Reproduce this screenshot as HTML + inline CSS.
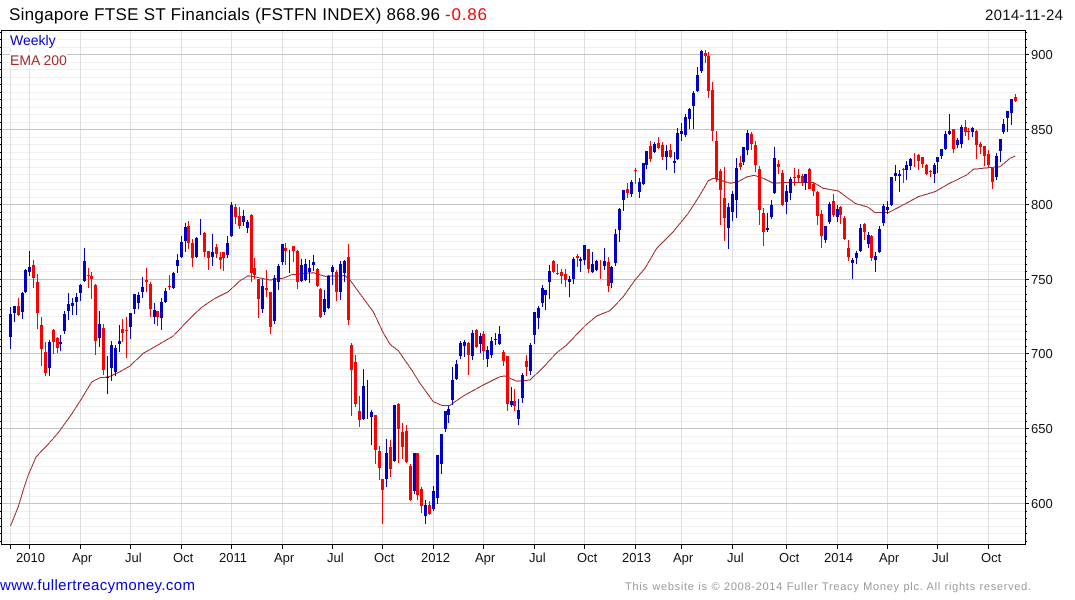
<!DOCTYPE html>
<html><head><meta charset="utf-8"><title>Singapore FTSE ST Financials</title>
<style>
html,body{margin:0;padding:0;background:#fff;width:1075px;height:600px;overflow:hidden}
svg{display:block;font-family:"Liberation Sans",Arial,sans-serif}
text{text-rendering:geometricPrecision}
</style></head><body>
<svg xmlns="http://www.w3.org/2000/svg" width="1075" height="600" viewBox="0 0 1075 600">
<g shape-rendering="crispEdges" fill="none">
<!-- minor horizontal grid -->
<path stroke="#f0f0f0" stroke-width="1" d="M2 32.5H1025M2 39.5H1025M2 47.5H1025M2 62.5H1025M2 69.5H1025M2 77.5H1025M2 84.5H1025M2 92.5H1025M2 99.5H1025M2 107.5H1025M2 114.5H1025M2 122.5H1025M2 137.5H1025M2 144.5H1025M2 152.5H1025M2 159.5H1025M2 167.5H1025M2 174.5H1025M2 182.5H1025M2 189.5H1025M2 197.5H1025M2 212.5H1025M2 219.5H1025M2 226.5H1025M2 234.5H1025M2 241.5H1025M2 249.5H1025M2 256.5H1025M2 264.5H1025M2 271.5H1025M2 286.5H1025M2 294.5H1025M2 301.5H1025M2 309.5H1025M2 316.5H1025M2 324.5H1025M2 331.5H1025M2 339.5H1025M2 346.5H1025M2 361.5H1025M2 368.5H1025M2 376.5H1025M2 383.5H1025M2 391.5H1025M2 398.5H1025M2 406.5H1025M2 413.5H1025M2 421.5H1025M2 436.5H1025M2 443.5H1025M2 451.5H1025M2 458.5H1025M2 466.5H1025M2 473.5H1025M2 481.5H1025M2 488.5H1025M2 496.5H1025M2 511.5H1025M2 518.5H1025M2 526.5H1025M2 533.5H1025M2 541.5H1025"/>
<!-- vertical grid -->
<path stroke="#dedede" stroke-width="1" d="M10.5 31V544M29.5 31V544M80.5 31V544M130.5 31V544M181.5 31V544M231.5 31V544M282.5 31V544M332.5 31V544M382.5 31V544M433.5 31V544M483.5 31V544M534.5 31V544M584.5 31V544M635.5 31V544M681.5 31V544M732.5 31V544M786.5 31V544M837.5 31V544M887.5 31V544M937.5 31V544M988.5 31V544"/>
<!-- major horizontal grid -->
<path stroke="#c4c4c4" stroke-width="1" d="M2 54.5H1025M2 129.5H1025M2 204.5H1025M2 279.5H1025M2 353.5H1025M2 428.5H1025M2 503.5H1025"/>
</g>
<!-- label knock-outs -->
<rect x="10" y="32" width="47" height="16" fill="#fff"/>
<rect x="10" y="52" width="57" height="16" fill="#fff"/>
<!-- EMA -->
<path fill="none" stroke="#a52a2a" stroke-width="1" shape-rendering="crispEdges" d="M10.5 526L18.3 506.7L23.3 490L28.3 475L36 457L40 452.7L46.7 446L58.3 432.7L71.7 414L80.3 400.7L91.7 382L100 377.7L108.3 377L120 371.7L130 366L143.3 353.3L156.7 345.7L173.3 336L190 318.3L201.7 307.3L213.3 299.3L228.3 291.7L240 280.7L248.3 275.7L256.7 277.3L270 280L283 278.3L291.7 274.7L313.3 272.7L325 276.3L345 275.7L350 280L363.3 298.3L373.3 311.7L382.7 331.7L390 344.3L398.3 350.7L411.7 370L420 383.3L433.3 401.7L441.7 405.3L450 405.3L463.3 396L483.3 385L500 376.7L505 376L516.7 381.3L530 380L543.3 367.3L556.7 352.7L566.7 345L585 325.7L596.7 316L610 310.7L623.3 296.7L635 280L645 268.3L656.7 248.3L673.3 231.7L688.3 213.3L700 195L708.3 180.7L713.3 178.3L720 180L730 183.3L738.3 181.7L746.7 177L754.3 175.3L763.3 178.3L773.3 183.3L786.7 182.3L813.3 182.3L823.3 188.3L838.3 191L845 196L855 203.3L868.3 207.3L875 212.7L888.3 212.7L905 204L918.3 196.7L935 191.7L948.3 184L966.7 175L973.3 169.3L988.3 167.7L1000 166.7L1010 158.3L1015.3 156"/>
<g shape-rendering="crispEdges" fill="none">
<!-- blue wicks -->
<path stroke="#0000cd" stroke-width="1" d="M10.5 307V349M14.5 306V322M22.5 292V319M25.5 269V293M29.5 251V276M49.5 340V376M60.5 335V351M64.5 311V334M68.5 293V320M72.5 298V315M76.5 293V315M80.5 284V301M84.5 248V282M99.5 311V347M107.5 356V394M111.5 341V381M115.5 345V376M119.5 325V352M130.5 313V339M134.5 294V314M138.5 292V309M142.5 277V298M154.5 303V324M161.5 298V330M165.5 288V303M173.5 272V289M177.5 254V273M181.5 236V258M185.5 223V252M196.5 237V258M200.5 219V235M212.5 234V266M227.5 236V258M231.5 202V237M243.5 210V226M247.5 220V233M262.5 279V313M274.5 275V324M278.5 264V290M282.5 244V265M289.5 250V273M301.5 259V282M305.5 259V281M309.5 260V283M313.5 255V271M324.5 290V315M328.5 275V309M332.5 265V285M340.5 261V300M344.5 260V282M363.5 369V420M367.5 380V419M371.5 410V445M386.5 439V487M394.5 405V462M414.5 453V494M425.5 500V524M433.5 486V511M437.5 455V504M441.5 434V474M445.5 411V432M448.5 406V423M452.5 367V405M456.5 360V380M460.5 341V359M464.5 340V357M472.5 330V360M480.5 333V353M487.5 346V367M491.5 337V358M495.5 333V345M499.5 326V345M511.5 387V407M518.5 399V425M522.5 373V403M530.5 343V375M534.5 312V344M538.5 306V329M542.5 285V307M545.5 290V310M549.5 265V299M569.5 276V297M573.5 257V284M580.5 257V272M584.5 245V265M592.5 252V273M596.5 260V271M604.5 248V270M611.5 266V288M615.5 229V266M619.5 208V242M623.5 190V211M631.5 180V197M639.5 178V198M643.5 163V185M646.5 151V169M654.5 142V153M666.5 145V170M674.5 152V173M677.5 128V160M681.5 123V141M685.5 114V137M689.5 108V129M693.5 91V129M697.5 67V92M701.5 50V73M728.5 203V249M732.5 191V221M736.5 158V218M743.5 147V165M747.5 130V155M767.5 213V232M771.5 200V219M774.5 147V194M786.5 185V214M790.5 177V200M805.5 174V190M825.5 226V243M829.5 202V224M837.5 205V222M852.5 258V279M856.5 251V264M860.5 224V252M868.5 232V248M875.5 252V272M879.5 226V253M883.5 204V226M887.5 201V214M891.5 177V206M895.5 165V181M899.5 170V192M906.5 161V180M910.5 158V170M934.5 163V183M937.5 157V173M941.5 149V159M945.5 131V150M949.5 114V135M957.5 138V148M961.5 125V148M972.5 127V137M996.5 153V180M1000.5 139V162M1003.5 119V134M1007.5 111V132M1011.5 99V125"/>
<!-- blue bodies -->
<path stroke="#0000cd" stroke-width="3" d="M10.5 314V337M14.5 306V313M22.5 293V312M25.5 270V292M29.5 267V272M49.5 342V368M60.5 342V344M64.5 314V331M68.5 304V311M72.5 303V306M76.5 297V302M80.5 285V293M84.5 261V281M99.5 324V338M107.5 377V378M111.5 345V368M115.5 348V372M119.5 341V344M130.5 313V327M134.5 294V309M138.5 295V303M142.5 287V292M154.5 310V317M161.5 302V318M165.5 291V302M173.5 273V288M177.5 260V266M181.5 242V257M185.5 227V241M196.5 238V257M212.5 252V257M227.5 243V255M231.5 205V236M243.5 216V222M247.5 222V228M262.5 286V309M274.5 278V321M278.5 266V282M282.5 244V262M301.5 265V281M305.5 264V280M309.5 268V272M313.5 262V265M324.5 299V312M328.5 276V308M332.5 267V272M340.5 264V292M344.5 261V273M363.5 386V419M371.5 412V417M386.5 453V479M394.5 405V461M414.5 453V491M425.5 505V516M433.5 491V509M437.5 455V498M441.5 434V464M445.5 411V429M448.5 409V415M452.5 380V400M456.5 364V379M460.5 343V356M464.5 342V346M472.5 333V356M480.5 336V344M487.5 350V359M491.5 341V355M495.5 339V340M499.5 334V344M511.5 401V405M518.5 410V419M522.5 375V398M530.5 345V371M534.5 312V335M538.5 308V318M542.5 288V303M545.5 290V295M549.5 271V282M569.5 279V282M573.5 259V279M580.5 259V261M584.5 245V260M592.5 264V272M596.5 261V270M604.5 261V266M611.5 267V283M615.5 234V263M619.5 209V230M623.5 190V200M631.5 182V194M639.5 182V192M643.5 163V184M646.5 151V165M654.5 144V152M666.5 151V157M674.5 161V163M677.5 133V159M681.5 131V134M685.5 117V135M689.5 109V119M693.5 93V106M697.5 75V91M701.5 51V71M728.5 207V228M732.5 194V212M736.5 168V200M743.5 147V162M747.5 133V150M767.5 228V230M771.5 205V217M774.5 158V193M786.5 191V202M790.5 179V193M805.5 174V183M825.5 226V240M829.5 204V222M837.5 209V217M852.5 260V263M856.5 253V258M860.5 228V251M868.5 235V244M875.5 256V260M879.5 229V252M883.5 206V223M887.5 207V210M891.5 177V205M895.5 173V176M899.5 174V176M906.5 165V170M910.5 159V166M934.5 165V174M937.5 157V162M941.5 149V156M945.5 134V149M949.5 131V134M957.5 140V145M961.5 127V144M972.5 128V132M996.5 156V177M1000.5 139V151M1003.5 124V132M1007.5 111V118M1011.5 99V113"/>
<!-- red wicks -->
<path stroke="#ff0000" stroke-width="1" d="M18.5 298V316M33.5 260V288M37.5 274V329M41.5 317V366M45.5 342V376M53.5 329V354M57.5 337V353M88.5 268V288M91.5 272V299M95.5 284V355M103.5 324V375M122.5 319V342M126.5 317V358M146.5 268V292M150.5 282V317M157.5 311V326M169.5 275V290M188.5 221V249M192.5 239V267M204.5 232V257M208.5 251V270M216.5 244V258M220.5 252V269M223.5 252V271M235.5 204V224M239.5 207V229M251.5 214V282M254.5 258V279M258.5 279V318M266.5 270V297M270.5 292V334M285.5 243V265M293.5 246V262M297.5 250V289M317.5 268V287M320.5 288V318M336.5 270V301M348.5 244V325M351.5 343V416M355.5 355V407M359.5 396V427M375.5 415V464M379.5 446V480M382.5 479V524M390.5 440V477M398.5 403V463M402.5 423V459M406.5 425V463M410.5 464V501M417.5 453V500M421.5 487V513M429.5 501V515M468.5 342V375M476.5 329V348M483.5 331V360M503.5 350V366M507.5 356V411M514.5 389V411M526.5 355V376M553.5 260V273M557.5 264V275M561.5 269V284M565.5 269V287M577.5 254V267M588.5 249V273M600.5 260V279M608.5 257V292M627.5 183V198M635.5 168V184M650.5 141V162M658.5 137V149M662.5 142V160M670.5 144V158M705.5 50V63M708.5 52V98M712.5 82V141M716.5 131V182M720.5 169V225M724.5 167V241M740.5 156V170M751.5 132V150M755.5 141V172M759.5 166V225M763.5 208V246M778.5 160V174M782.5 170V206M794.5 168V186M798.5 169V182M802.5 174V186M809.5 168V189M813.5 183V196M817.5 191V225M821.5 210V248M833.5 194V217M840.5 206V224M844.5 216V240M848.5 240V261M864.5 223V240M871.5 235V261M903.5 168V183M914.5 153V167M918.5 154V170M922.5 157V168M926.5 164V175M930.5 170V177M953.5 129V153M965.5 120V136M968.5 128V140M976.5 130V159M980.5 142V154M984.5 146V166M988.5 150V168M992.5 168V189M1015.5 94V102"/>
<!-- red bodies -->
<path stroke="#ff0000" stroke-width="3" d="M18.5 306V315M33.5 265V278M37.5 282V313M41.5 325V349M45.5 352V373M53.5 330V342M57.5 338V348M88.5 275V276M91.5 276V279M95.5 285V341M103.5 328V370M122.5 329V333M126.5 330V331M146.5 280V282M150.5 284V309M157.5 311V317M169.5 286V287M188.5 226V243M192.5 243V258M204.5 233V252M208.5 251V258M216.5 247V254M220.5 257V260M223.5 252V258M235.5 207V217M239.5 216V226M251.5 215V273M254.5 268V275M258.5 279V299M266.5 288V290M270.5 292V327M285.5 248V251M293.5 246V251M297.5 251V282M317.5 269V286M320.5 289V317M336.5 272V292M348.5 257V320M351.5 345V370M355.5 362V404M359.5 411V420M375.5 415V450M379.5 451V468M382.5 479V490M390.5 447V469M398.5 404V429M402.5 432V447M406.5 431V462M410.5 466V500M417.5 453V495M421.5 489V506M429.5 505V514M468.5 343V355M476.5 330V347M483.5 334V351M503.5 352V361M507.5 356V404M514.5 401V406M526.5 361V367M553.5 261V272M557.5 273V274M561.5 272V276M565.5 274V280M577.5 256V258M588.5 249V269M608.5 262V286M627.5 189V193M635.5 170V171M650.5 146V159M658.5 143V148M662.5 145V157M670.5 150V157M705.5 53V56M708.5 56V91M712.5 90V131M716.5 141V179M720.5 171V190M724.5 198V218M740.5 163V167M751.5 134V144M755.5 145V165M759.5 169V210M763.5 213V232M778.5 164V167M782.5 173V205M794.5 177V178M798.5 175V178M802.5 176V183M809.5 169V189M813.5 184V191M817.5 192V216M821.5 214V236M833.5 201V215M840.5 207V215M844.5 218V239M848.5 248V257M864.5 224V232M871.5 236V258M903.5 169V170M918.5 155V161M922.5 157V164M926.5 165V174M930.5 171V172M953.5 129V149M965.5 127V132M968.5 131V132M976.5 131V145M980.5 144V147M984.5 146V156M988.5 154V165M992.5 168V182M1015.5 97V101"/>
<!-- frame -->
<path stroke="#000" stroke-width="1" d="M1 30.5H1026M1.5 30V545M1 544.5H1026M1025.5 30V545"/>
<!-- ticks left / right -->
<path stroke="#000" stroke-width="1" d="M0 32.5H1M0 39.5H1M0 47.5H1M0 54.5H1M0 62.5H1M0 69.5H1M0 77.5H1M0 84.5H1M0 92.5H1M0 99.5H1M0 107.5H1M0 114.5H1M0 122.5H1M0 129.5H1M0 137.5H1M0 144.5H1M0 152.5H1M0 159.5H1M0 167.5H1M0 174.5H1M0 182.5H1M0 189.5H1M0 197.5H1M0 204.5H1M0 212.5H1M0 219.5H1M0 226.5H1M0 234.5H1M0 241.5H1M0 249.5H1M0 256.5H1M0 264.5H1M0 271.5H1M0 279.5H1M0 286.5H1M0 294.5H1M0 301.5H1M0 309.5H1M0 316.5H1M0 324.5H1M0 331.5H1M0 339.5H1M0 346.5H1M0 353.5H1M0 361.5H1M0 368.5H1M0 376.5H1M0 383.5H1M0 391.5H1M0 398.5H1M0 406.5H1M0 413.5H1M0 421.5H1M0 428.5H1M0 436.5H1M0 443.5H1M0 451.5H1M0 458.5H1M0 466.5H1M0 473.5H1M0 481.5H1M0 488.5H1M0 496.5H1M0 503.5H1M0 511.5H1M0 518.5H1M0 526.5H1M0 533.5H1M0 541.5H1M1026 32.5H1027M1026 39.5H1027M1026 47.5H1027M1026 54.5H1029M1026 62.5H1027M1026 69.5H1027M1026 77.5H1027M1026 84.5H1027M1026 92.5H1027M1026 99.5H1027M1026 107.5H1027M1026 114.5H1027M1026 122.5H1027M1026 129.5H1029M1026 137.5H1027M1026 144.5H1027M1026 152.5H1027M1026 159.5H1027M1026 167.5H1027M1026 174.5H1027M1026 182.5H1027M1026 189.5H1027M1026 197.5H1027M1026 204.5H1029M1026 212.5H1027M1026 219.5H1027M1026 226.5H1027M1026 234.5H1027M1026 241.5H1027M1026 249.5H1027M1026 256.5H1027M1026 264.5H1027M1026 271.5H1027M1026 279.5H1029M1026 286.5H1027M1026 294.5H1027M1026 301.5H1027M1026 309.5H1027M1026 316.5H1027M1026 324.5H1027M1026 331.5H1027M1026 339.5H1027M1026 346.5H1027M1026 353.5H1029M1026 361.5H1027M1026 368.5H1027M1026 376.5H1027M1026 383.5H1027M1026 391.5H1027M1026 398.5H1027M1026 406.5H1027M1026 413.5H1027M1026 421.5H1027M1026 428.5H1029M1026 436.5H1027M1026 443.5H1027M1026 451.5H1027M1026 458.5H1027M1026 466.5H1027M1026 473.5H1027M1026 481.5H1027M1026 488.5H1027M1026 496.5H1027M1026 503.5H1029M1026 511.5H1027M1026 518.5H1027M1026 526.5H1027M1026 533.5H1027M1026 541.5H1027"/>
<!-- ticks bottom -->
<path stroke="#000" stroke-width="1" d="M10.5 545V549M29.5 545V549M80.5 545V549M130.5 545V549M181.5 545V549M231.5 545V549M282.5 545V549M332.5 545V549M382.5 545V549M433.5 545V549M483.5 545V549M534.5 545V549M584.5 545V549M635.5 545V549M681.5 545V549M732.5 545V549M786.5 545V549M837.5 545V549M887.5 545V549M937.5 545V549M988.5 545V549"/>
</g>
<!-- title -->
<text x="9" y="20" font-size="17" fill="#000" textLength="431" lengthAdjust="spacing">Singapore FTSE ST Financials (FSTFN INDEX) 868.96</text>
<text x="445" y="20" font-size="17" fill="#ff0000" textLength="42" lengthAdjust="spacing">-0.86</text>
<text x="985" y="20" font-size="15" fill="#111" textLength="78" lengthAdjust="spacing">2014-11-24</text>
<text x="10" y="45" font-size="14" fill="#0000cd">Weekly</text>
<text x="10" y="65" font-size="14" fill="#a52a2a">EMA 200</text>
<!-- y axis labels -->
<g font-size="13" fill="#111">
<text x="1031" y="59">900</text><text x="1031" y="134">850</text><text x="1031" y="209">800</text><text x="1031" y="284">750</text><text x="1031" y="358">700</text><text x="1031" y="433">650</text><text x="1031" y="508">600</text>
<text x="16" y="562">2010</text><text x="72" y="562">Apr</text><text x="125" y="562">Jul</text><text x="173" y="562">Oct</text><text x="219" y="562">2011</text><text x="274" y="562">Apr</text><text x="327" y="562">Jul</text><text x="374" y="562">Oct</text><text x="421" y="562">2012</text><text x="475" y="562">Apr</text><text x="529" y="562">Jul</text><text x="577" y="562">Oct</text><text x="622" y="562">2013</text><text x="673" y="562">Apr</text><text x="727" y="562">Jul</text><text x="779" y="562">Oct</text><text x="824" y="562">2014</text><text x="879" y="562">Apr</text><text x="932" y="562">Jul</text><text x="981" y="562">Oct</text>
</g>
<text x="0" y="590" font-size="15" fill="#0000ee" textLength="195" lengthAdjust="spacing">www.fullertreacymoney.com</text>
<text x="625" y="590" font-size="11" fill="#999" textLength="406" lengthAdjust="spacing">This website is © 2008-2014 Fuller Treacy Money plc. All rights reserved.</text>
</svg>
</body></html>
